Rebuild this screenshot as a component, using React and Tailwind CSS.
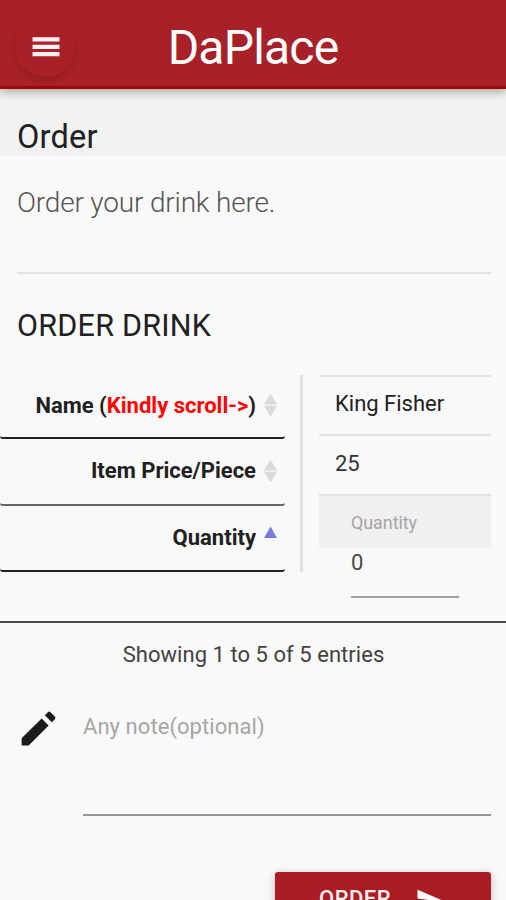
import React from "react";

function SortIcon() {
  return (
    <svg className="ml-2 h-6 w-[13px] shrink-0" viewBox="0 0 13 24" fill="#dadada">
      <path d="M6.5 .5 13 11.5H0zM0 12.8h13L6.5 23.5z" />
    </svg>
  );
}

function HeaderCell({ children, icon, className }) {
  return (
    <div className={"flex items-center justify-end rounded-[3px] border-b-2 pr-[8px] pb-[2px] text-[22px] font-bold whitespace-nowrap text-[#212121] " + className}>
      <span>{children}</span>
      {icon}
    </div>
  );
}

export default function App() {
  return (
    <div className="flex h-[900px] w-[506px] flex-col overflow-hidden bg-[#f9f9f9] font-[Roboto,sans-serif] text-[#212121]">
      <header className="relative z-10 grid h-[89px] shrink-0 grid-cols-[60px_1fr_60px] items-center border-b-[3px] border-[#a30505] bg-[#a82128] px-[15px] pt-[7px] shadow-[0_3px_9px_rgba(0,0,0,0.32)]">
        <button className="flex h-[60px] w-[60px] items-center justify-center rounded-full shadow-[0_3px_7px_rgba(70,0,0,0.22)]">
          <svg className="ml-px h-5 w-7" viewBox="0 0 28 20" fill="#fff1f1">
            <path d="M.5 .3h27v4.3H.5zM.5 7.7h27V12H.5zM.5 15h27v4.3H.5z" />
          </svg>
        </button>
        <h1 className="pt-[2px] text-center text-[48px] leading-[56px] tracking-[-0.8px] text-white">
          <span>DaPlace</span>
        </h1>
      </header>

      <div className="flex h-[67px] shrink-0 items-center bg-[#f2f2f2] pt-[28px] pl-[17px]">
        <h2 className="text-[32.5px] leading-[38px] tracking-[0.2px]">
          <span>Order</span>
        </h2>
      </div>

      <div className="mr-[15px] ml-[17px] h-[118px] shrink-0 border-b-2 border-[#e2e2e2] pt-[31px]">
        <p className="text-[28px] leading-8 font-light tracking-[-0.18px] text-[#555555]">
          <span>Order your drink here.</span>
        </p>
      </div>

      <h3 className="mt-[34px] ml-[17px] h-9 shrink-0 text-[30.5px] leading-9 tracking-[0.25px]">
        <span>ORDER DRINK</span>
      </h3>

      <div className="mt-[31px] flex h-[248px] shrink-0 border-b-2 border-[#4a4a4a]">
        <div className="grid h-[197px] w-[285px] grid-rows-[64px_67px_66px]">
          <HeaderCell className="border-[#212121]" icon={<SortIcon />}>
            Name (<span className="text-[#ff0505]">Kindly scroll-&gt;</span>)
          </HeaderCell>
          <HeaderCell className="border-[#666666]" icon={<SortIcon />}>
            Item Price/Piece
          </HeaderCell>
          <HeaderCell
            className="border-[#212121]"
            icon={
              <svg className="ml-2 h-6 w-[13px] shrink-0" viewBox="0 0 13 24" fill="#777bdc">
                <path d="M6.5 1.5 13 13H0z" />
              </svg>
            }
          >
            Quantity
          </HeaderCell>
        </div>
        <div className="ml-[15px] h-[197px] w-[3px] bg-[#e0e0e0]" />
        <div className="ml-[16px] flex w-[172px] flex-col text-[22px]">
          <div className="h-[59px] border-t-2 border-[#e2e2e2] pt-[13px] pl-4 leading-7">
            <span>King Fisher</span>
          </div>
          <div className="h-[60px] border-t-2 border-[#e2e2e2] pt-[14px] pl-4 leading-7 text-[#333333]">
            <span>25</span>
          </div>
          <div className="h-[54px] border-t-2 border-[#e2e2e2] bg-[#f0f0f0] pt-[15px] pl-8 text-[18px] leading-6 tracking-[-0.1px] text-[#a6a6a6]">
            <span>Quantity</span>
          </div>
          <div className="ml-[32px] h-[50px] w-[108px] border-b-2 border-[#a0a0a0] pt-px leading-7 text-[#484848]">
            <span>0</span>
          </div>
        </div>
      </div>

      <p className="mt-[18px] h-7 shrink-0 pl-px text-center text-[22px] leading-7 tracking-[0.04px] text-[#424242]">
        <span>Showing 1 to 5 of 5 entries</span>
      </p>

      <div className="mt-[37px] mr-[15px] ml-[16px] flex h-[110px] shrink-0">
        <svg className="h-[45px] w-[45px]" viewBox="0 0 24 24" fill="#1b1b1b">
          <path d="M3 17.25V21h3.75L17.4 10.35l-3.75-3.75L3 17.25zM20.71 7.04a1 1 0 0 0 0-1.41l-2.34-2.34a1 1 0 0 0-1.41 0l-1.6 1.6 3.75 3.75 1.6-1.6z" />
        </svg>
        <div className="ml-[22px] flex-1 border-b-2 border-[#969696] pt-[7px] text-[22px] leading-7 tracking-[0.06px] text-[#a6a6a6]">
          <span>Any note(optional)</span>
        </div>
      </div>

      <button className="mt-[56px] mr-[15px] flex h-[54px] w-[216px] shrink-0 items-center self-end rounded-[3px] bg-[#ab1d24] pl-[44px] text-[22px] leading-7 font-medium tracking-[0.5px] text-[#ffeeee] shadow-[0_2px_8px_rgba(0,0,0,0.25)]">
        <span>ORDER</span>
        <svg className="mt-[3px] ml-[24px] h-[30px] w-[30px]" viewBox="0 0 24 24" fill="white">
          <path d="M2.01 21 23 12 2.01 3 2 10l15 2-15 2z" />
        </svg>
      </button>
    </div>
  );
}
